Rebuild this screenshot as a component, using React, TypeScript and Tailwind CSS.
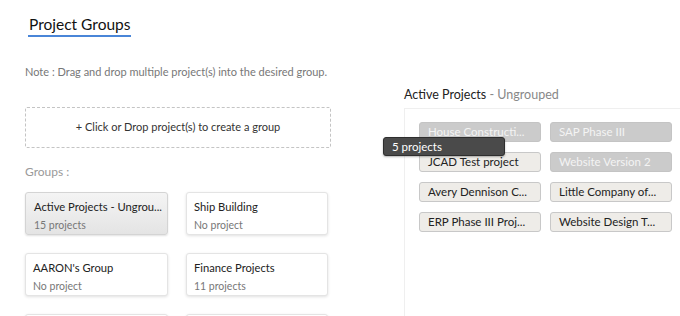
import React from "react";

const chips: { name: string; disabled?: boolean }[] = [
  { name: "House Constructi...", disabled: true },
  { name: "SAP Phase III", disabled: true },
  { name: "JCAD Test project" },
  { name: "Website Version 2", disabled: true },
  { name: "Avery Dennison C..." },
  { name: "Little Company of..." },
  { name: "ERP Phase III Proj..." },
  { name: "Website Design T..." },
];

const groups = [
  { name: "Active Projects - Ungrou...", sub: "15 projects", active: true },
  { name: "Ship Building", sub: "No project" },
  { name: "AARON's Group", sub: "No project" },
  { name: "Finance Projects", sub: "11 projects" },
  { name: "", sub: "" },
  { name: "", sub: "" },
];

export default function App() {
  return (
    <div
      className="relative flex h-[316px] w-[680px] overflow-hidden bg-white text-[#333]"
      style={{ fontFamily: "Lato, 'Open Sans', sans-serif" }}
    >
      {/* Left column */}
      <div className="flex w-[331px] shrink-0 flex-col pl-[25px]">
        <div className="mt-[15px] ml-[3px] shrink-0 self-start border-b-2 border-[#4a86d8] px-[1px] pb-[1px] text-[15.5px] leading-[19px] text-[#111]">
          Project Groups
        </div>
        <div className="mt-[28px] shrink-0 text-[11px] leading-[13px] text-[#777]">
          Note : Drag and drop multiple project(s) into the desired group.
        </div>
        <div className="mt-[29px] flex h-[41px] shrink-0 items-center justify-center rounded-[2px] border border-dashed border-[#c4c4c4] text-[11px] text-[#333]">
          + Click or Drop project(s) to create a group
        </div>
        <div className="mt-[17px] shrink-0 text-[12px] leading-[14px] text-[#999]">Groups :</div>
        <div className="mt-[13px] grid shrink-0 grid-cols-[143px_142px] gap-x-[18px] gap-y-[18px]">
          {groups.map((g, i) => (
            <div
              key={i}
              className={
                g.active
                  ? "h-[43px] overflow-hidden whitespace-nowrap rounded-[3px] border border-[#d4d4d4] bg-gradient-to-b from-[#f4f4f4] to-[#e4e4e4] px-[8px] pt-[7px] shadow-[0_1px_2px_rgba(0,0,0,0.12)]"
                  : "h-[43px] overflow-hidden whitespace-nowrap rounded-[3px] border border-[#e4e4e4] bg-white px-[7px] pt-[7px] shadow-[0_1px_3px_rgba(0,0,0,0.12)]"
              }
            >
              <div className="text-[11.2px] leading-[14px] text-[#222]">{g.name}</div>
              <div className="mt-[5px] text-[10.5px] leading-[12px] text-[#777]">{g.sub}</div>
            </div>
          ))}
        </div>
      </div>

      {/* Right column */}
      <div className="ml-[73px] flex flex-1 flex-col">
        <div className="mt-[88px] shrink-0 text-[12.5px] leading-[14px]">
          <span className="text-[#222]">Active Projects</span>
          <span className="text-[#888]"> - Ungrouped</span>
        </div>
        <div className="mt-[6px] flex-1 border-t border-l border-[#efefef] pt-[13px] pl-[14px]">
          <div className="grid grid-cols-[122px_122px] gap-x-[9px] gap-y-[10px]">
            {chips.map((c, i) => (
              <div
                key={i}
                className={
                  c.disabled
                    ? "flex h-[20px] items-center whitespace-nowrap rounded-[3px] border border-[#c4c4c4] bg-[#cbcbcb] pl-[8px] text-[11.5px] text-[#f4f4f4]"
                    : "flex h-[20px] items-center whitespace-nowrap rounded-[3px] border border-[#c8c8c8] bg-[#eeece8] pl-[8px] text-[11.5px] text-[#222]"
                }
              >
                {c.name}
              </div>
            ))}
          </div>
        </div>
      </div>

      {/* Drag tooltip */}
      <div className="absolute left-[383px] top-[137px] flex h-[19px] w-[122px] items-center rounded-[3px] border border-[#2e2e2e] bg-[#4a4a4a] pl-[8px] text-[11.5px] text-white shadow-[0_1px_2px_rgba(0,0,0,0.3)]">
        5 projects
      </div>
    </div>
  );
}
